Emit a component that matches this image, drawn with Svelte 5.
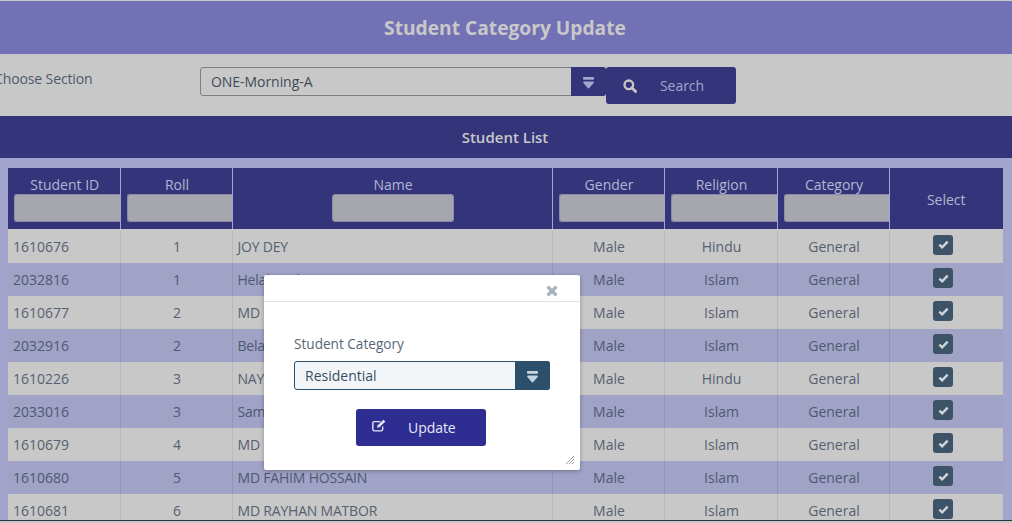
<script>
  const columns = [
    { label: 'Student ID', filter: 'stub' },
    { label: 'Roll', filter: 'stub' },
    { label: 'Name', filter: 'mid' },
    { label: 'Gender', filter: 'stub' },
    { label: 'Religion', filter: 'stub' },
    { label: 'Category', filter: 'stub' },
    { label: 'Select', filter: null }
  ];
  const rows = [
    ['1610676', '1', 'JOY DEY', 'Male', 'Hindu', 'General'],
    ['2032816', '1', 'Helal Miah', 'Male', 'Islam', 'General'],
    ['1610677', '2', 'MD HASAN', 'Male', 'Islam', 'General'],
    ['2032916', '2', 'Belal Hossain', 'Male', 'Islam', 'General'],
    ['1610226', '3', 'NAYAN DAS', 'Male', 'Hindu', 'General'],
    ['2033016', '3', 'Samir Ahmed', 'Male', 'Islam', 'General'],
    ['1610679', '4', 'MD RAKIB', 'Male', 'Islam', 'General'],
    ['1610680', '5', 'MD FAHIM HOSSAIN', 'Male', 'Islam', 'General'],
    ['1610681', '6', 'MD RAYHAN MATBOR', 'Male', 'Islam', 'General']
  ];
</script>

{#snippet caret()}
  <svg class="caret" viewBox="0 0 12 12" width="13" height="12" aria-hidden="true">
    <rect x="0.5" y="0" width="11" height="2.8" rx="0.8" fill="currentColor" />
    <path d="M1.6 5.4h8.8L6 10.4z" fill="currentColor" stroke="currentColor" stroke-width="2" stroke-linejoin="round" />
  </svg>
{/snippet}

<div class="page">
  <header class="title">Student Category Update</header>

  <section class="filter">
    <span class="filter-label">Choose Section</span>
    <div class="picker">
      <span class="picker-value">ONE-Morning-A</span>
      <span class="picker-btn">{@render caret()}</span>
    </div>
    <button class="search">
      <svg viewBox="0 0 14 14" width="14" height="14" aria-hidden="true">
        <circle cx="5.8" cy="5.8" r="4.3" fill="none" stroke="currentColor" stroke-width="2.3" />
        <path d="M8.8 8.8l3.8 3.8" stroke="currentColor" stroke-width="2.8" stroke-linecap="round" />
      </svg>
      <span>Search</span>
    </button>
  </section>

  <div class="list-title">Student List</div>

  <div class="table-wrap">
    <table>
      <colgroup>
        <col style="width:112px" /><col style="width:112px" /><col style="width:320px" /><col style="width:112px" /><col style="width:113px" /><col style="width:112px" /><col style="width:114px" />
      </colgroup>
      <thead>
        <tr>
          {#each columns as c}
            <th class:solo={!c.filter}>
              <div class="th-label">{c.label}</div>
              {#if c.filter}<div class="th-filter {c.filter}"></div>{/if}
            </th>
          {/each}
        </tr>
      </thead>
      <tbody>
        {#each rows as r, i}
          <tr class:alt={i % 2 === 1} class:first={i === 0}>
            <td>{r[0]}</td>
            <td class="c">{r[1]}</td>
            <td class="name">{r[2]}</td>
            <td class="c">{r[3]}</td>
            <td class="c">{r[4]}</td>
            <td class="c">{r[5]}</td>
            <td class="c pick">
              <span class="check">
                <svg viewBox="0 0 12 10" width="11" height="9" aria-hidden="true">
                  <path d="M1.4 5.2l3.1 3L10.6 1.8" fill="none" stroke="currentColor" stroke-width="2.6" />
                </svg>
              </span>
            </td>
          </tr>
        {/each}
      </tbody>
    </table>
  </div>

  <div class="modal">
    <div class="modal-head">
      <svg class="close" viewBox="0 0 12 12" width="12" height="12" aria-hidden="true">
        <path d="M1.6 1.6l8.8 8.8M10.4 1.6l-8.8 8.8" stroke="currentColor" stroke-width="3.4" />
      </svg>
    </div>
    <div class="modal-body">
      <div class="modal-label">Student Category</div>
      <div class="modal-select">
        <span class="modal-value">Residential</span>
        <span class="modal-btn">{@render caret()}</span>
      </div>
      <button class="update">
        <svg viewBox="0 0 16 14" width="15" height="13" aria-hidden="true">
          <path d="M11.4 8.2V11a1.8 1.8 0 0 1-1.8 1.8H2.6A1.8 1.8 0 0 1 .8 11V4.6a1.8 1.8 0 0 1 1.8-1.8H9" fill="none" stroke="currentColor" stroke-width="1.5" />
          <path d="M5.4 9.4l.5-2.5L12.2.7l2.1 2-6.4 6.2z" fill="currentColor" />
        </svg>
        <span>Update</span>
      </button>
    </div>
    <svg class="grip" viewBox="0 0 10 10" width="10" height="10" aria-hidden="true">
      <path d="M9 1L1 9M9 4L4 9M9 7L7 9" stroke="#8f9aa3" stroke-width="1" />
    </svg>
  </div>
</div>

<style>
  :global(body) {
    margin: 0;
    background: #c8c8c8;
    overflow: hidden;
  }
  .page {
    position: relative;
    width: 1012px;
    height: 523px;
    overflow: hidden;
    font-family: "Open Sans", "Liberation Sans", sans-serif;
    font-size: 14px;
    color: #4b5563;
    background: #c8c8c8;
    padding-top: 1px;
    box-sizing: border-box;
  }
  .title {
    height: 53px;
    background: #7271b5;
    color: #c8c8c8;
    font-size: 19.2px;
    font-weight: 700;
    display: flex;
    align-items: center;
    justify-content: center;
    padding-right: 2px;
  }
  .filter {
    height: 62px;
    background: #c8c8c8;
    display: flex;
    align-items: flex-start;
    position: relative;
  }
  .filter-label {
    width: 200px;
    margin-left: -6px;
    margin-right: 6px;
    margin-top: 15px;
    line-height: 20px;
    letter-spacing: -0.12px;
    color: #4f5a68;
  }
  .picker {
    margin-top: 13px;
    width: 406px;
    height: 29px;
    box-sizing: border-box;
    border: 1px solid #7f7f7f;
    border-radius: 3px;
    display: flex;
    background: #c8c8c8;
  }
  .picker-value {
    flex: 1;
    padding-left: 10px;
    line-height: 27px;
    letter-spacing: -0.05px;
    color: #3f4b59;
  }
  .picker-btn {
    width: 35px;
    margin: -1px -1px -1px 0;
    background: #33347a;
    border-radius: 0 3px 3px 0;
    color: #a3a5cc;
    display: flex;
    align-items: center;
    justify-content: center;
  }
  .caret { display: block; position: relative; top: 1px; }
  .search {
    margin-top: 13px;
    width: 130px;
    height: 37px;
    border: 0;
    border-radius: 3px;
    background: #33347a;
    color: #c8c8c8;
    font: inherit;
    display: flex;
    align-items: center;
    padding: 0 0 0 17px;
  }
  .search span {
    margin-left: 23px;
    letter-spacing: -0.06px;
    color: #a3a5cc;
  }
  .list-title {
    height: 42px;
    background: #33347a;
    color: #c8c8c8;
    font-size: 15px;
    font-weight: 600;
    display: flex;
    align-items: center;
    justify-content: center;
    padding-right: 2px;
    padding-bottom: 1px;
    box-sizing: border-box;
  }
  .table-wrap {
    height: 363px;
    box-sizing: border-box;
    overflow: hidden;
    background: #a3a5cc;
    padding: 10px 9px 0 8px;
    border-bottom: 1px solid #2b3040;
  }
  table {
    table-layout: fixed;
    width: 995px;
    border-collapse: collapse;
  }
  th {
    height: 62px;
    padding: 7px 0 0;
    background: #33347a;
    color: #b4b5d2;
    font-weight: 400;
    text-align: center;
    vertical-align: top;
    box-sizing: border-box;
    border-left: 1px solid #a3a5cc;
    border-bottom: 2px solid #c8c8c8;
    overflow: hidden;
  }
  th:first-child { border-left: 0; }
  th.solo { vertical-align: middle; padding: 2px 0 0; }
  .th-label { line-height: 20px; padding-left: 2px; }
  th.solo .th-label { padding-left: 0; }
  .th-filter {
    height: 28px;
    margin-top: -1px;
    box-sizing: border-box;
    background: #a6a6ae;
    border: 1px solid #8c8ca6;
    border-radius: 3px 0 0 3px;
  }
  .th-filter.stub { margin-left: 6px; border-right: 0; }
  .th-filter.mid { width: 122px; margin-left: auto; margin-right: auto; border-radius: 3px; position: relative; left: 1px; }
  td {
    height: 33px;
    padding: 0 5px;
    box-sizing: border-box;
    background: #c8c8c8;
    border-left: 1px solid #b9b9c4;
    color: #566070;
    white-space: nowrap;
  }
  td:first-child { border-left: 0; }
  tr.alt td { background: #a0a2c6; border-left-color: #9395bd; color: #4f5972; }
  td.c { text-align: center; padding: 0 4px 0 6px; }
  td.name { letter-spacing: -0.2px; }
  td.pick { padding: 0 6px 0 0; }
  tr.first td { padding-bottom: 2px; }
  .check {
    display: inline-flex;
    align-items: center;
    justify-content: center;
    width: 20px;
    height: 20px;
    border-radius: 3px;
    background: #3d5468;
    color: #cfd5da;
    vertical-align: middle;
    position: relative;
    top: -2px;
  }
  .modal {
    position: absolute;
    left: 264px;
    top: 275px;
    width: 316px;
    height: 195px;
    background: #fff;
    border-radius: 2px;
    box-shadow: 0 1px 4px rgba(0, 0, 0, 0.3);
  }
  .modal-head {
    height: 26px;
    border-bottom: 1px solid #e3e3e3;
    position: relative;
  }
  .close {
    position: absolute;
    right: 22px;
    top: 10px;
    color: #a7b3bc;
  }
  .modal-body {
    padding: 32px 30px 0;
    display: flex;
    flex-direction: column;
  }
  .modal-label {
    line-height: 20px;
    font-size: 13.6px;
    color: #566676;
    margin-bottom: 7px;
  }
  .modal-select {
    display: flex;
    height: 29px;
    box-sizing: border-box;
    border: 1px solid #2c4f6b;
    border-radius: 3px;
    background: #f3f6f9;
  }
  .modal-value {
    flex: 1;
    padding-left: 10px;
    line-height: 27px;
    color: #3a4d61;
  }
  .modal-btn {
    width: 35px;
    margin: -1px -1px -1px 0;
    background: #2c4f6b;
    color: #c4d3de;
    border-radius: 0 3px 3px 0;
    display: flex;
    align-items: center;
    justify-content: center;
  }
  .update {
    align-self: center;
    margin-top: 19px;
    margin-left: -2px;
    width: 130px;
    height: 37px;
    border: 0;
    border-radius: 3px;
    background: #2e2d92;
    color: #e8e8f4;
    font: inherit;
    display: flex;
    align-items: center;
    padding: 0 0 0 16px;
  }
  .update span { margin-left: 21px; letter-spacing: -0.06px; }
  .update svg { position: relative; top: -2px; }
  .grip {
    position: absolute;
    right: 5px;
    bottom: 5px;
  }
</style>
